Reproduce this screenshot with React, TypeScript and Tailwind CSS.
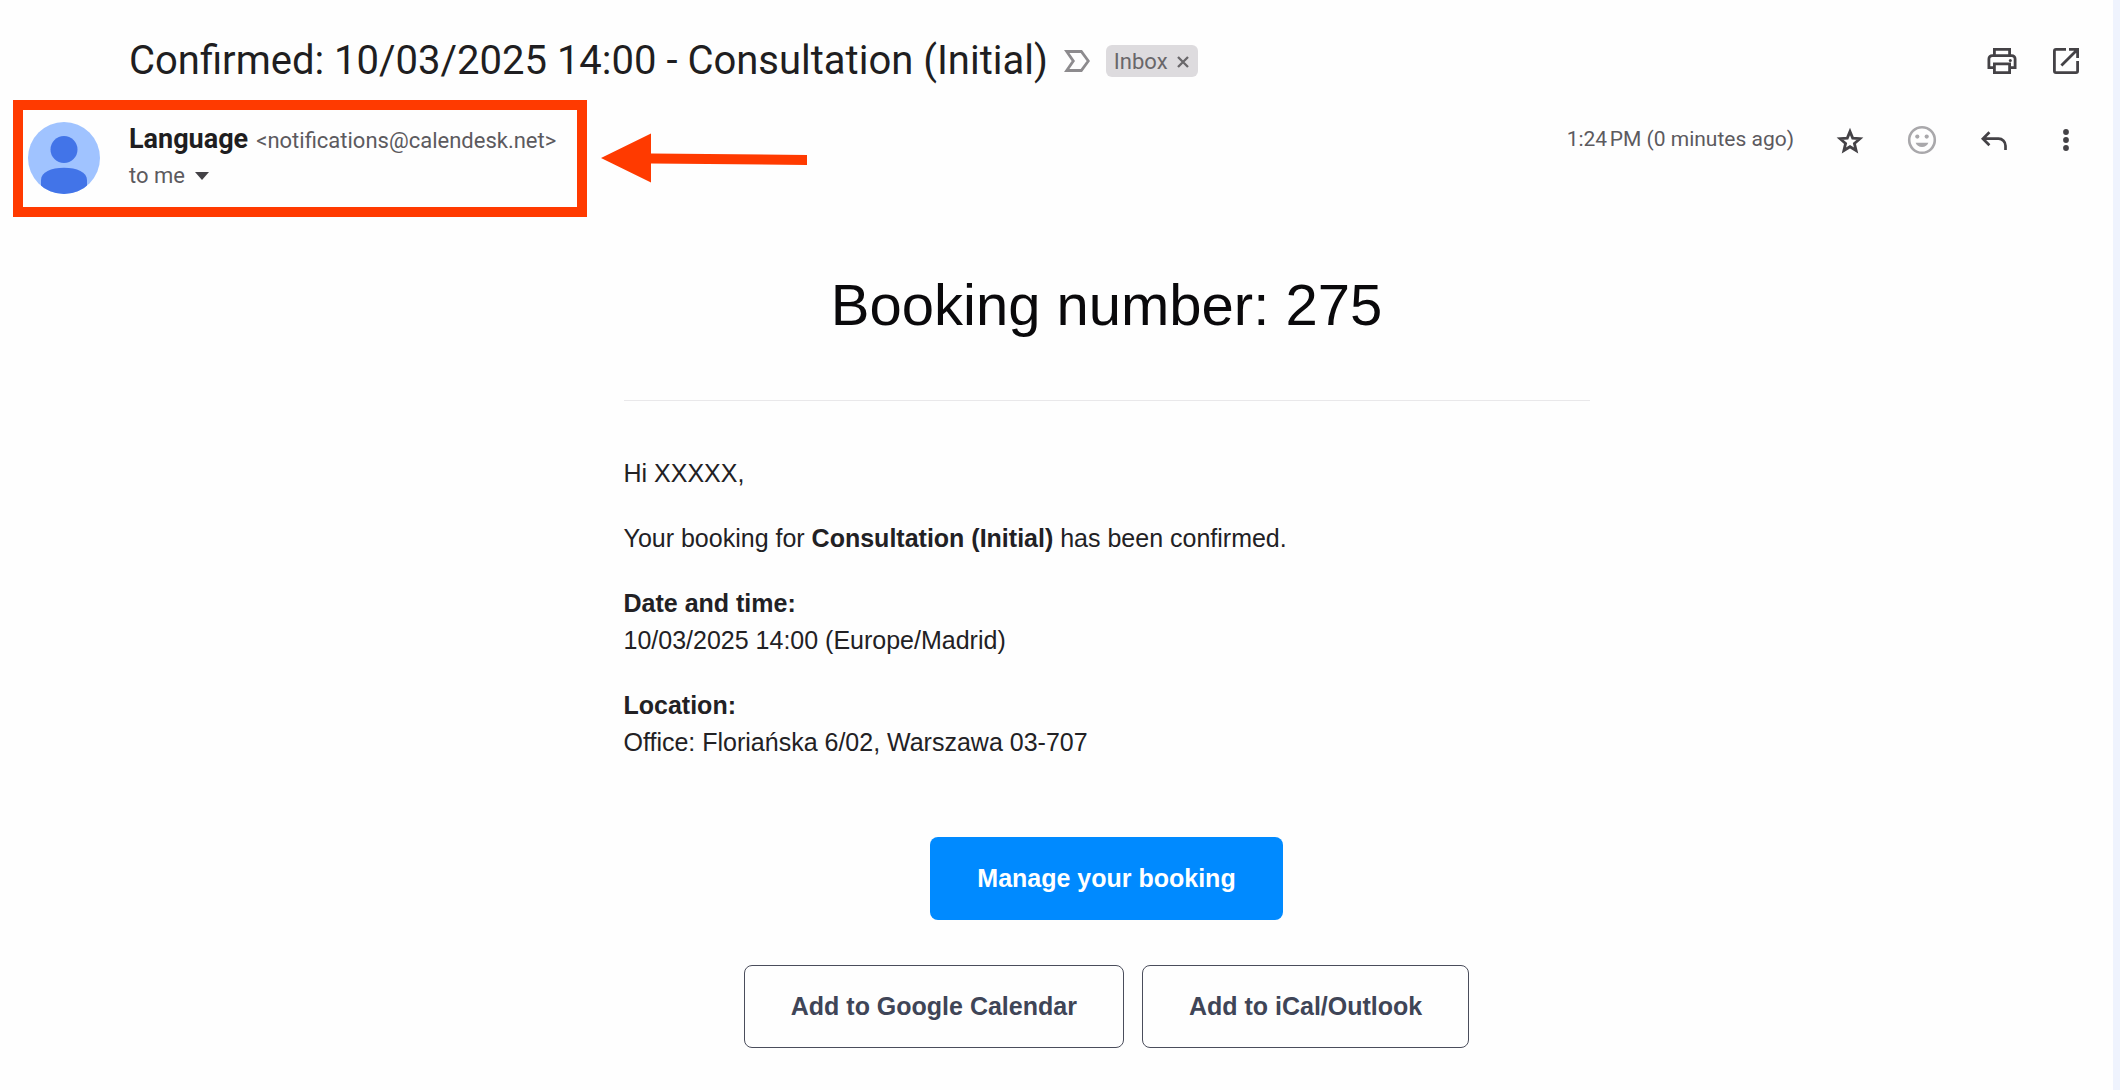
import type { ReactNode } from "react";

type IconButtonProps = {
  label: string;
  muted?: boolean;
  children: ReactNode;
};

const IconButton = ({ label, muted = false, children }: IconButtonProps) => (
  <button
    type="button"
    aria-label={label}
    className={`flex size-8 items-center justify-center ${muted ? "text-[#a9a8ab]" : "text-[#444246]"}`}
  >
    {children}
  </button>
);

const PrintIcon = () => (
  <svg viewBox="0 0 32 32" className="size-8" fill="none" stroke="currentColor" strokeWidth="2.8">
    <path d="M8.4 10.5V4.4h15.2v6.1" />
    <path d="M8 22.6H2.9V14a3.4 3.4 0 0 1 3.4-3.4h19.4a3.4 3.4 0 0 1 3.4 3.4v8.6H24" />
    <path d="M8.4 18.9h15.2v8.7H8.4z" />
    <circle cx="24.3" cy="15.4" r="1.5" fill="currentColor" stroke="none" />
  </svg>
);

const OpenIcon = () => (
  <svg viewBox="0 0 32 32" className="size-8" fill="none" stroke="currentColor" strokeWidth="2.8">
    <path d="M16 4.4H6a1.6 1.6 0 0 0-1.6 1.6v20a1.6 1.6 0 0 0 1.6 1.6h20a1.6 1.6 0 0 0 1.6-1.6V16" />
    <path d="M19 4.4h8.6V13M27 5 11.4 20.6" />
  </svg>
);

const StarIcon = () => (
  <svg viewBox="0 0 32 32" className="size-8" fill="none" stroke="currentColor" strokeWidth="2.8">
    <path d="M16 7.4l2.7 6.7 7.2.6-5.5 4.7 1.7 7.1-6.1-3.8-6.1 3.8 1.7-7.1-5.5-4.7 7.2-.6z" />
  </svg>
);

const SmileIcon = () => (
  <svg viewBox="0 0 32 32" className="size-8" fill="currentColor">
    <circle cx="16" cy="16" r="12.8" fill="none" stroke="currentColor" strokeWidth="2.6" />
    <circle cx="11.3" cy="12.6" r="2.1" />
    <circle cx="20.7" cy="12.6" r="2.1" />
    <path d="M9.6 18.8h12.8c-.9 2.6-3.3 4.2-6.4 4.2s-5.5-1.6-6.4-4.2z" />
  </svg>
);

const ReplyIcon = () => (
  <svg viewBox="0 0 32 32" className="size-8" fill="none" stroke="currentColor" strokeWidth="2.7">
    <path d="M11.4 8.2 4.9 14.7l6.5 6.5M5 14.7h15.5a7 7 0 0 1 7 7V26" />
  </svg>
);

const MoreIcon = () => (
  <svg viewBox="0 0 32 32" className="size-8" fill="currentColor">
    <circle cx="16" cy="8" r="2.9" />
    <circle cx="16" cy="16" r="2.9" />
    <circle cx="16" cy="24" r="2.9" />
  </svg>
);

const Avatar = () => (
  <svg viewBox="0 0 72 72" className="size-[72px] shrink-0" aria-hidden="true">
    <defs>
      <clipPath id="avatar-clip">
        <circle cx="36" cy="36" r="36" />
      </clipPath>
    </defs>
    <g clipPath="url(#avatar-clip)">
      <rect width="72" height="72" fill="#a0c3ff" />
      <circle cx="36" cy="27.5" r="13.5" fill="#4274e8" />
      <path d="M13 76V58c0-8 10-12.3 23-12.3S59 50 59 58v18z" fill="#4274e8" />
    </g>
  </svg>
);

const SubjectBar = () => (
  <header className="flex items-center pl-[129px] pr-[31px]">
    <h1 className="font-['Roboto',sans-serif] text-[40px] leading-[52px] text-[#1f1e21]">
      Confirmed: 10/03/2025 14:00 - Consultation (Initial)
    </h1>
    <svg viewBox="0 0 26 22" className="ml-4 h-[22px] w-[26px]" fill="none" stroke="#8d8b8e" strokeWidth="2.8" aria-hidden="true">
      <path d="M2.7 1.5h14.6L24.3 11l-7 9.5H2.7L9.3 11z" />
    </svg>
    <span className="ml-4 flex h-8 items-center gap-2 rounded-md bg-[#dddbde] px-2 font-['Roboto',sans-serif] text-[22px] text-[#69676a]">
      Inbox
      <button type="button" aria-label="Remove label Inbox">
        <svg viewBox="0 0 14 14" className="size-[14px]" stroke="currentColor" strokeWidth="2.3">
          <path d="M2 3l10 10M12 3 2 13" />
        </svg>
      </button>
    </span>
    <div className="ml-auto flex gap-8">
      <IconButton label="Print all">
        <PrintIcon />
      </IconButton>
      <IconButton label="In new window">
        <OpenIcon />
      </IconButton>
    </div>
  </header>
);

const SenderRow = () => (
  <section className="relative mt-[13px] flex items-start pb-[18px] pl-7 pr-[31px] pt-[22px] font-['Roboto',sans-serif]">
    <Avatar />
    <div className="ml-[29px] text-[22px] leading-[35px] text-[#5c5a5e]">
      <p>
        <span className="mr-2 text-[27px] font-bold text-[#1f1e21]">Language</span>
        &lt;notifications@calendesk.net&gt;
      </p>
      <button type="button" className="flex items-center gap-[10px]">
        to me
        <svg viewBox="0 0 14 8" className="h-2 w-[14px]" fill="#444246" aria-hidden="true">
          <path d="M0 0h14L7 8z" />
        </svg>
      </button>
    </div>
    <div className="ml-auto flex h-9 items-center gap-10">
      <time className="text-[21px] text-[#5c5a5e]">1:24{"\u202f"}PM (0 minutes ago)</time>
      <IconButton label="Star">
        <StarIcon />
      </IconButton>
      <IconButton label="Add reaction" muted>
        <SmileIcon />
      </IconButton>
      <IconButton label="Reply">
        <ReplyIcon />
      </IconButton>
      <IconButton label="More">
        <MoreIcon />
      </IconButton>
    </div>

    {/* Callout around the sender */}
    <div className="pointer-events-none absolute left-[13px] top-0 h-[117px] w-[574px] border-[10px] border-[#ff3a00]" />
    <svg viewBox="0 0 206 50" className="pointer-events-none absolute left-[601px] top-[33px] h-[50px] w-[206px]" fill="#ff3a00" aria-hidden="true">
      <path d="M0 25 50 .5v20L206 22v10L50 30.5v19z" />
    </svg>
  </section>
);

const Message = () => (
  <article className="pl-[129px] pr-[29px] font-['Liberation_Sans','Arial',sans-serif]">
    <div className="mx-auto max-w-[966px] text-[25px] leading-[37px] text-[#222124]">
      <h2 className="border-b border-[#e9e8ea] pb-[60px] pt-[58px] text-center text-[58px] leading-[70px] text-[#0a090b]">
        Booking number: 275
      </h2>
      <div className="mt-[54px] flex flex-col gap-7">
        <p>Hi XXXXX,</p>
        <p>
          Your booking for <strong>Consultation (Initial)</strong> has been confirmed.
        </p>
        <p>
          <strong>Date and time:</strong>
          <br />
          10/03/2025 14:00 (Europe/Madrid)
        </p>
        <p>
          <strong>Location:</strong>
          <br />
          Office: Floriańska 6/02, Warszawa 03-707
        </p>
      </div>
      <div className="mt-[76px] flex flex-col items-center gap-[45px] font-bold">
        <a href="#manage" className="rounded-lg bg-[#008aff] px-[47px] py-[23px] text-white">
          Manage your booking
        </a>
        <div className="flex flex-wrap justify-center gap-[18px] text-[#3f4557]">
          <a href="#google" className="rounded-lg border border-[#4a4d5b] px-[46px] py-[22px]">
            Add to Google Calendar
          </a>
          <a href="#ical" className="rounded-lg border border-[#4a4d5b] px-[46px] py-[22px]">
            Add to iCal/Outlook
          </a>
        </div>
      </div>
    </div>
  </article>
);

const App = () => {
  return (
    <main className="min-h-screen border-r-[7px] border-[#eff3fd] bg-[#fefefe] pb-10 pt-[35px]">
      <SubjectBar />
      <SenderRow />
      <Message />
    </main>
  );
};

export default App;
